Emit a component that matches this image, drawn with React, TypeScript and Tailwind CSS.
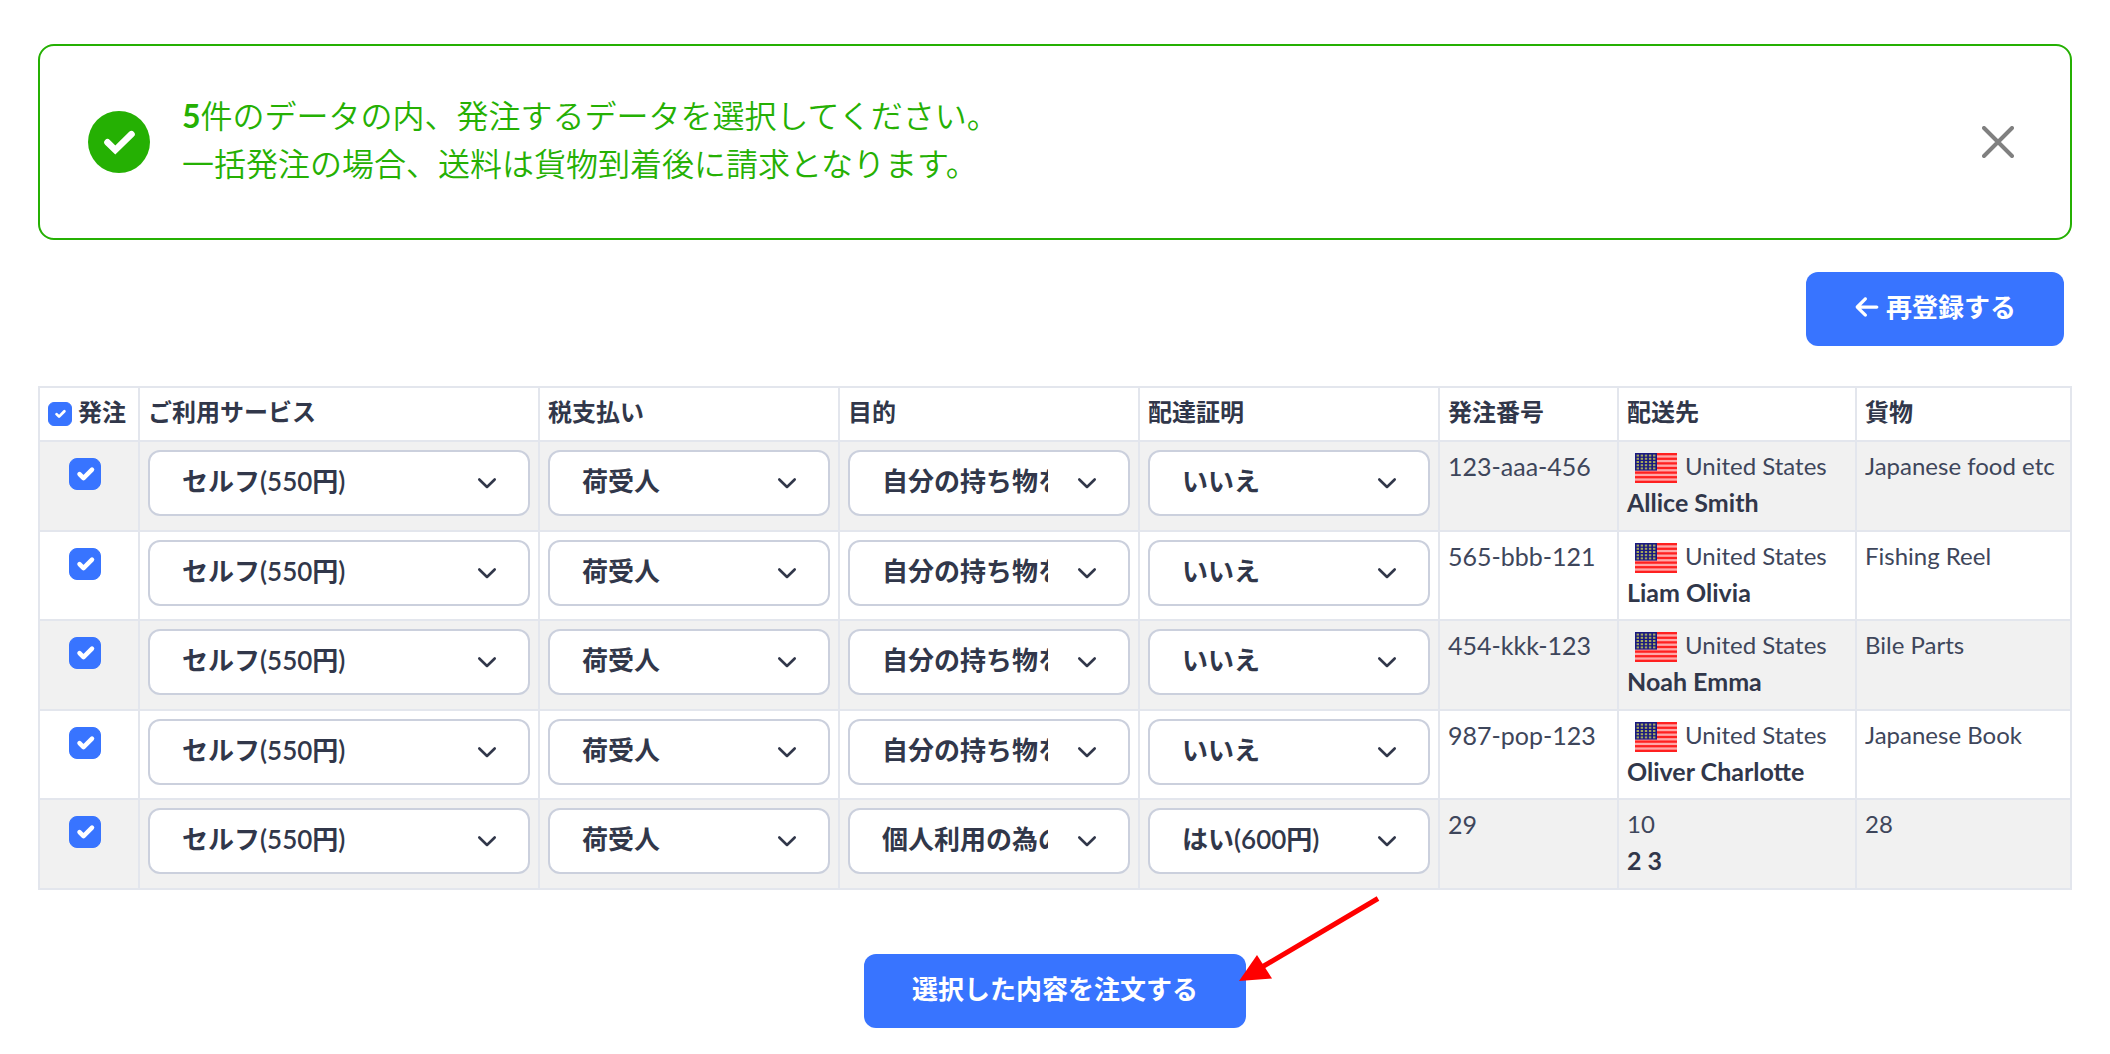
import { useState } from "react";
import { FaArrowLeft } from "react-icons/fa6";
import clsx from "clsx";

const SERVICES = ["セルフ(550円)"];
const TAX_PAYERS = ["荷受人"];
const PURPOSES = ["自分の持ち物を送る", "個人利用の為の購入"];
const CERTIFICATES = ["いいえ", "はい(600円)"];

const HEADERS = [
  "ご利用サービス",
  "税支払い",
  "目的",
  "配達証明",
  "発注番号",
  "配送先",
  "貨物",
];

interface Order {
  orderNo: string;
  country: string;
  hasFlag: boolean;
  name: string;
  cargo: string;
  purpose: string;
  certificate: string;
}

const ORDERS: Order[] = [
  {
    orderNo: "123-aaa-456",
    country: "United States",
    hasFlag: true,
    name: "Allice Smith",
    cargo: "Japanese food etc",
    purpose: PURPOSES[0],
    certificate: CERTIFICATES[0],
  },
  {
    orderNo: "565-bbb-121",
    country: "United States",
    hasFlag: true,
    name: "Liam Olivia",
    cargo: "Fishing Reel",
    purpose: PURPOSES[0],
    certificate: CERTIFICATES[0],
  },
  {
    orderNo: "454-kkk-123",
    country: "United States",
    hasFlag: true,
    name: "Noah Emma",
    cargo: "Bile Parts",
    purpose: PURPOSES[0],
    certificate: CERTIFICATES[0],
  },
  {
    orderNo: "987-pop-123",
    country: "United States",
    hasFlag: true,
    name: "Oliver Charlotte",
    cargo: "Japanese Book",
    purpose: PURPOSES[0],
    certificate: CERTIFICATES[0],
  },
  {
    orderNo: "29",
    country: "10",
    hasFlag: false,
    name: "2 3",
    cargo: "28",
    purpose: PURPOSES[1],
    certificate: CERTIFICATES[1],
  },
];

function UsFlag() {
  return (
    <svg viewBox="0 0 42 30" className="mt-1 ml-2 h-[30px] w-[42px] shrink-0">
      <rect width="42" height="30" fill="#ff2020" />
      {[0, 1, 2, 3, 4, 5].map((i) => (
        <rect
          key={i}
          y={(i * 2 + 1) * (30 / 13)}
          width="42"
          height={30 / 13}
          fill="#ffa8a8"
        />
      ))}
      <rect width="22" height="17.6" fill="#1a1a80" />
      {[0, 1, 2, 3, 4].map((row) =>
        [0, 1, 2, 3, 4].map((col) => (
          <rect
            key={`${row}-${col}`}
            x={1.6 + col * 4.1}
            y={1.6 + row * 3.2}
            width="2.4"
            height="2"
            fill="#a3a65c"
          />
        )),
      )}
    </svg>
  );
}

interface CheckboxProps {
  label: string;
  checked: boolean;
  onChange: (checked: boolean) => void;
  small?: boolean;
}

function Checkbox({ label, checked, onChange, small }: CheckboxProps) {
  return (
    <span className="inline-grid place-items-center">
      <input
        type="checkbox"
        aria-label={label}
        checked={checked}
        onChange={(e) => onChange(e.target.checked)}
        className={clsx(
          "appearance-none border border-[#cbd0dd] bg-white [grid-area:1/1] checked:border-[#3874ff] checked:bg-[#3874ff]",
          small ? "size-6 rounded-md" : "size-8 rounded-lg",
        )}
      />
      {checked && (
        <svg
          viewBox="0 0 32 32"
          fill="none"
          stroke="#fff"
          strokeWidth="4.5"
          strokeLinecap="round"
          strokeLinejoin="round"
          className={clsx(
            "pointer-events-none [grid-area:1/1]",
            small ? "size-5" : "size-8",
          )}
        >
          <path d="M10.5 16.2l4 4 8.5-8.5" />
        </svg>
      )}
    </span>
  );
}

interface SelectProps {
  label: string;
  options: string[];
  initial: string;
}

function Select({ label, options, initial }: SelectProps) {
  const [value, setValue] = useState(initial);

  return (
    <div className="grid items-center">
      <select
        aria-label={label}
        value={value}
        onChange={(e) => setValue(e.target.value)}
        className="h-[66px] w-full appearance-none rounded-xl border-2 border-[#cbd0dd] bg-white pr-20 pb-1 pl-8 text-[26px] font-semibold text-[#31374a] [grid-area:1/1]"
      >
        {options.map((option) => (
          <option key={option}>{option}</option>
        ))}
      </select>
      <svg
        viewBox="0 0 20 12"
        fill="none"
        stroke="#31374a"
        strokeWidth="2.6"
        strokeLinecap="round"
        strokeLinejoin="round"
        className="pointer-events-none mr-[33px] h-3 w-5 justify-self-end [grid-area:1/1]"
      >
        <path d="M2.3 2.5L10 10l7.7-7.5" />
      </svg>
    </div>
  );
}

function Notice({ onClose }: { onClose: () => void }) {
  return (
    <div
      role="alert"
      className="flex items-center gap-8 rounded-2xl border-2 border-[#25b003] px-12 py-[46px] text-[#25b003]"
    >
      <svg viewBox="0 0 62 62" className="size-[62px] shrink-0">
        <circle cx="31" cy="31" r="31" fill="#25b003" />
        <path
          d="M19.5 31.3L27.3 39L43.5 23.2"
          fill="none"
          stroke="#fff"
          strokeWidth="6.6"
          strokeLinecap="round"
        />
      </svg>
      <p className="flex-1 pb-1 text-[32px] leading-[48px] font-[350]">
        <strong className="font-bold">5</strong>
        件のデータの内、発注するデータを選択してください。
        <br />
        一括発注の場合、送料は貨物到着後に請求となります。
      </p>
      <button type="button" aria-label="閉じる" onClick={onClose} className="p-2">
        <svg
          viewBox="0 0 32 32"
          stroke="#808080"
          strokeWidth="4"
          strokeLinecap="round"
          className="size-8"
        >
          <path d="M2 2L30 30M30 2L2 30" />
        </svg>
      </button>
    </div>
  );
}

export default function App() {
  const [showNotice, setShowNotice] = useState(true);
  const [selected, setSelected] = useState(ORDERS.map(() => true));

  const allSelected = selected.every(Boolean);

  const toggleRow = (index: number, checked: boolean) => {
    setSelected(selected.map((value, i) => (i === index ? checked : value)));
  };

  return (
    <main
      lang="ja"
      className="bg-white px-[38px] pt-11 pb-6 font-[Lato,'Noto_Sans_CJK_JP',sans-serif] text-2xl text-[#3e465b]"
    >
      {showNotice && <Notice onClose={() => setShowNotice(false)} />}

      <div className="mt-8 flex justify-end pr-2">
        <button
          type="button"
          className="flex items-center gap-1.5 rounded-xl bg-[#3874ff] px-12 pt-4 pb-5 text-[26px] leading-[38px] font-bold text-white"
        >
          <FaArrowLeft />
          再登録する
        </button>
      </div>

      <table className="mt-10 w-full table-fixed border-collapse text-left leading-9 [&_td]:border-2 [&_td]:border-[#e3e6ed] [&_td]:px-2 [&_td]:align-top [&_th]:border-2 [&_th]:border-[#e3e6ed] [&_th]:px-2 [&_th]:pt-1.5 [&_th]:pb-2.5">
        <colgroup>
          <col className="w-[100px]" />
          <col className="w-[400px]" />
          <col className="w-[300px]" />
          <col className="w-[300px]" />
          <col className="w-[300px]" />
          <col className="w-[179px]" />
          <col className="w-[238px]" />
          <col />
        </colgroup>
        <thead>
          <tr className="text-[#31374a]">
            <th scope="col" className="font-bold">
              <div className="flex items-center gap-1.5 whitespace-nowrap">
                <span className="flex pt-1">
                  <Checkbox
                    small
                    label="すべて選択"
                    checked={allSelected}
                    onChange={(checked) =>
                      setSelected(ORDERS.map(() => checked))
                    }
                  />
                </span>
                発注
              </div>
            </th>
            {HEADERS.map((header) => (
              <th key={header} scope="col" className="font-bold">
                {header}
              </th>
            ))}
          </tr>
        </thead>
        <tbody>
          {ORDERS.map((order, index) => (
            <tr
              key={order.orderNo}
              className="odd:h-[90px] odd:bg-[#f1f1f1] even:h-[89px]"
            >
              <td className="pt-4">
                <div className="flex pl-[21px]">
                  <Checkbox
                    label={order.orderNo}
                    checked={selected[index]}
                    onChange={(checked) => toggleRow(index, checked)}
                  />
                </div>
              </td>
              <td className="pt-2">
                <Select
                  label={HEADERS[0]}
                  options={SERVICES}
                  initial={SERVICES[0]}
                />
              </td>
              <td className="pt-2">
                <Select
                  label={HEADERS[1]}
                  options={TAX_PAYERS}
                  initial={TAX_PAYERS[0]}
                />
              </td>
              <td className="pt-2">
                <Select
                  label={HEADERS[2]}
                  options={PURPOSES}
                  initial={order.purpose}
                />
              </td>
              <td className="pt-2">
                <Select
                  label={HEADERS[3]}
                  options={CERTIFICATES}
                  initial={order.certificate}
                />
              </td>
              <td className="pt-1.5 text-[25px]">{order.orderNo}</td>
              <td className="pt-1.5">
                <div className="flex items-center gap-2 whitespace-nowrap">
                  {order.hasFlag && <UsFlag />}
                  {order.country}
                </div>
                <strong className="block text-[25px] font-bold text-[#31374a]">
                  {order.name}
                </strong>
              </td>
              <td className="pt-1.5">{order.cargo}</td>
            </tr>
          ))}
        </tbody>
      </table>

      <div className="mt-16 flex justify-center">
        <div className="relative">
          <button
            type="button"
            className="rounded-xl bg-[#3874ff] px-12 pt-4 pb-5 text-[26px] leading-[38px] font-bold text-white"
          >
            選択した内容を注文する
          </button>
          {/* Callout arrow pointing at the submit button */}
          <svg
            viewBox="0 0 144 88"
            className="pointer-events-none absolute -top-[58px] left-full -ml-2 h-[88px] w-36"
          >
            <path d="M19 74L140 2.5" stroke="#f00" strokeWidth="5" />
            <path d="M1 85L19 59L34 82.5Z" fill="#f00" />
          </svg>
        </div>
      </div>
    </main>
  );
}
